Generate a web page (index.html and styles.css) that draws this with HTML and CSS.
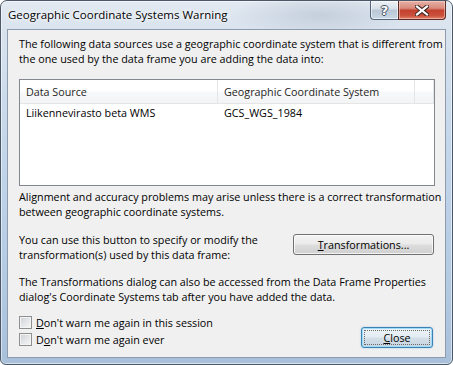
FILE: index.html
```html
<!DOCTYPE html>
<html lang="en">
<head>
    <meta charset="UTF-8">
    <meta name="viewport" content="width=device-width, initial-scale=1.0">
    <title>Geographic Coordinate Systems Warning</title>
    <link rel="stylesheet" href="styles.css">
</head>
<body>
    <div class="window">
        <div class="titlebar">
            <span class="title">Geographic Coordinate Systems Warning</span>
            <div class="caption-buttons">
                <span class="cap-btn help">?</span>
                <span class="cap-btn close">
                    <svg width="14" height="11" viewBox="0 0 14 11">
                        <path d="M2 1.5 L12 9.5 M12 1.5 L2 9.5" stroke="#3b2522" stroke-width="4.2" stroke-linecap="square"/>
                        <path d="M2 1.5 L12 9.5 M12 1.5 L2 9.5" stroke="#fff" stroke-width="2.2" stroke-linecap="square"/>
                    </svg>
                </span>
            </div>
        </div>

        <div class="client">
            <p class="text">The following data sources use a geographic coordinate system that is different from<br>the one used by the data frame you are adding the data into:</p>

            <div class="listview">
                <div class="lv-header">
                    <div class="lv-col col-source">Data Source</div>
                    <div class="lv-col col-gcs">Geographic Coordinate System</div>
                    <div class="lv-col col-rest"></div>
                </div>
                <div class="lv-row">
                    <div class="lv-cell col-source">Liikennevirasto beta WMS</div>
                    <div class="lv-cell col-gcs">GCS_WGS_1984</div>
                </div>
            </div>

            <p class="text gap-small">Alignment and accuracy problems may arise unless there is a correct transformation<br>between geographic coordinate systems.</p>

            <div class="transform-row">
                <p class="text">You can use this button to specify or modify the<br>transformation(s) used by this data frame:</p>
                <button class="btn btn-transform"><u>T</u>ransformations...</button>
            </div>

            <p class="text gap-mid">The Transformations dialog can also be accessed from the Data Frame Properties<br>dialog's Coordinate Systems tab after you have added the data.</p>

            <div class="bottom-row">
                <div class="checks">
                    <label class="check"><span class="box"></span><span><u>D</u>on't warn me again in this session</span></label>
                    <label class="check"><span class="box"></span><span>D<u>o</u>n't warn me again ever</span></label>
                </div>
                <button class="btn btn-close"><u>C</u>lose</button>
            </div>
        </div>
    </div>
</body>
</html>
```
FILE: styles.css
```css
body {
    margin: 0;
    font-family: "Open Sans", sans-serif;
    font-size: 10.75px;
    color: #000;
    background: #fff;
}
.window {
    box-sizing: border-box;
    width: 453px;
    height: 365px;
    border: 1px solid #4a5868;
    border-radius: 7px 7px 6px 6px;
    background: linear-gradient(180deg, #e2e9f1 0%, #d9e3ee 8%, #c3d6ea 40%, #b4cbe4 75%, #a9c0da 100%);
    box-shadow: inset 0 0 0 1px rgba(255, 255, 255, 0.55);
    overflow: hidden;
}
.titlebar {
    height: 28px;
    display: flex;
    justify-content: space-between;
    align-items: flex-start;
    padding: 0 6px 0 7px;
    background: radial-gradient(ellipse 90px 22px at 320px 14px, rgba(150, 165, 185, 0.35), rgba(150, 165, 185, 0));
}
.title {
    font-size: 11.5px;
    line-height: 28px;
    text-shadow: 0 0 6px #fff, 0 0 3px #fff;
}
.caption-buttons {
    display: flex;
}
.cap-btn {
    box-sizing: border-box;
    height: 19px;
    display: flex;
    align-items: center;
    justify-content: center;
    border: 1px solid #56667a;
    border-top: none;
}
.help {
    width: 28px;
    border-right: none;
    border-radius: 0 0 0 4px;
    background: linear-gradient(180deg, #eef2f6 0%, #d6dfe8 45%, #b9c7d6 50%, #c9d6e3 100%);
    box-shadow: inset 0 0 0 1px rgba(255, 255, 255, 0.6);
    color: #fff;
    font-family: "DejaVu Sans", sans-serif;
    font-weight: bold;
    font-size: 13px;
    text-shadow: 1px 0 0 #43505f, -1px 0 0 #43505f, 0 1px 0 #43505f, 0 -1px 0 #43505f;
}
.close {
    width: 48px;
    border-color: #5b2b25;
    border-radius: 0 0 4px 0;
    background: linear-gradient(180deg, #e6b1a8 0%, #d98a7c 40%, #c4412f 52%, #c9503c 80%, #e2806a 100%);
    box-shadow: inset 0 0 0 1px rgba(255, 220, 210, 0.5);
}
.client {
    box-sizing: border-box;
    height: 329px;
    margin: 0 6px 0 6px;
    padding: 7px 10px 0 11px;
    border: 1px solid #8d9bad;
    background: #f0f0f0;
}
.text {
    margin: 0;
    line-height: 15px;
    white-space: nowrap;
}
.listview {
    box-sizing: border-box;
    height: 107px;
    margin-top: 12px;
    border: 1px solid #828790;
    background: #fff;
}
.lv-header {
    box-sizing: border-box;
    height: 24px;
    display: flex;
    border-bottom: 1px solid #e5e5e5;
    background: linear-gradient(180deg, #ffffff 0%, #ffffff 45%, #f7f8f9 55%, #f3f4f6 100%);
}
.lv-col {
    box-sizing: border-box;
    padding: 2px 0 0 6px;
    line-height: 21px;
    border-right: 1px solid #e5e5e5;
    color: #1e1e1e;
}
.col-source {
    width: 198px;
}
.col-gcs {
    width: 197px;
}
.col-rest {
    flex: 1;
}
.lv-row {
    display: flex;
    padding-top: 1px;
}
.lv-cell {
    box-sizing: border-box;
    padding-left: 6px;
    line-height: 17px;
}
.gap-small {
    margin-top: 4px;
}
.transform-row {
    display: flex;
    justify-content: space-between;
    align-items: flex-start;
    margin-top: 13px;
}
.btn {
    box-sizing: border-box;
    height: 21px;
    padding: 0;
    font-family: inherit;
    font-size: inherit;
    color: #000;
    border: 1px solid #707070;
    border-radius: 3px;
    background: linear-gradient(180deg, #f2f2f2 0%, #ebebeb 48%, #dddddd 52%, #cfcfcf 100%);
    box-shadow: inset 0 0 0 1px rgba(255, 255, 255, 0.75);
}
.btn-transform {
    width: 141px;
    margin: 1px 1px 0 0;
}
.gap-mid {
    margin-top: 12px;
}
.bottom-row {
    display: flex;
    justify-content: space-between;
    align-items: flex-end;
    margin-top: 9px;
}
.checks {
    display: flex;
    flex-direction: column;
}
.check {
    display: flex;
    align-items: center;
    height: 17px;
    gap: 4px;
}
.box {
    box-sizing: border-box;
    width: 13px;
    height: 13px;
    border: 1px solid #8e8f8f;
    background: linear-gradient(135deg, #cbcfd5 0%, #e3e5e8 50%, #f6f6f6 100%);
    box-shadow: inset 0 0 0 1px #f4f4f4;
}
.btn-close {
    position: relative;
    width: 72px;
    margin-right: 2px;
    border-color: #3c7fb1;
    background: linear-gradient(180deg, #eef4f8 0%, #e4ecf2 48%, #d3dee7 52%, #c7d6e2 100%);
    box-shadow: inset 0 0 0 1px #9fdcf9, 0 0 2px rgba(80, 170, 230, 0.5);
}
.btn-close::after {
    content: "";
    position: absolute;
    top: 2px;
    left: 2px;
    right: 2px;
    bottom: 2px;
    border: 1px dotted #6a6a6a;
}
```
